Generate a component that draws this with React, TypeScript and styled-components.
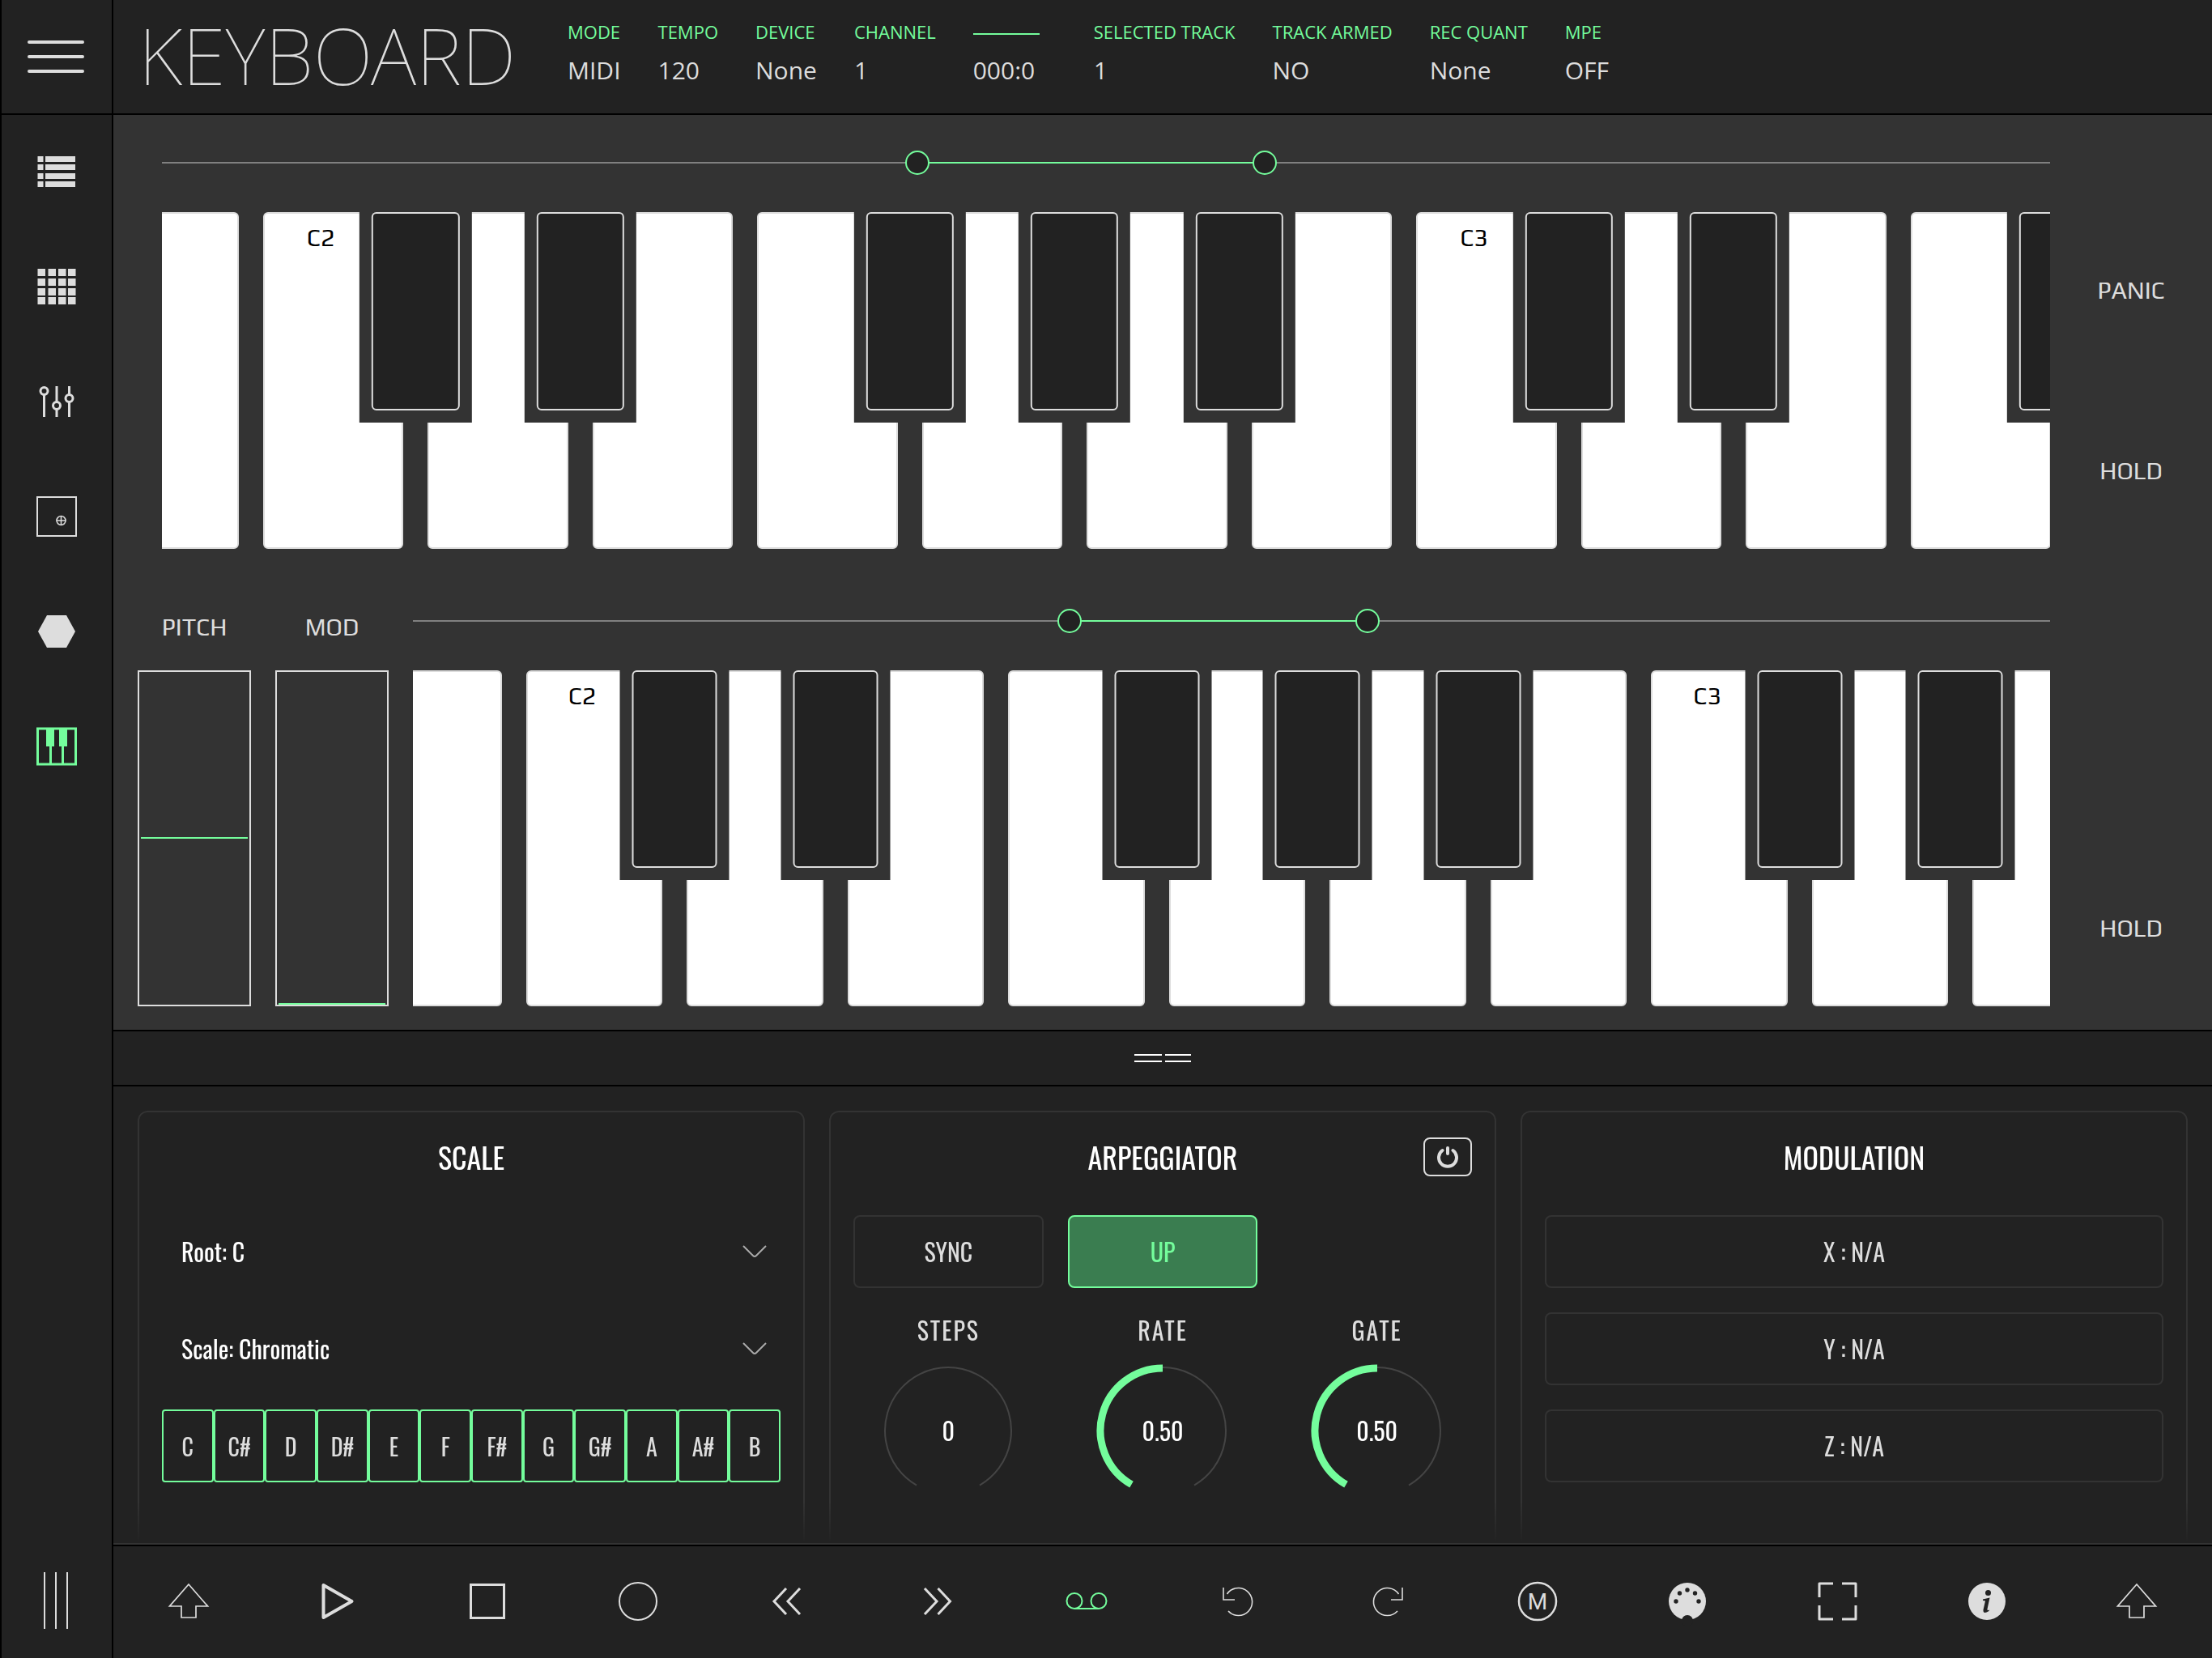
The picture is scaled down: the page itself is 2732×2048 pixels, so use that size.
import React, { useId, useState } from "react";
import styled, { createGlobalStyle, css } from "styled-components";

const c = {
  green: "#74fd9c",
  greenFill: "#3a7d50",
  ink: "#dddddd",
  white: "#ffffff",
  panel: "#222222",
  stage: "#333333",
  rail: "#808080",
  edge: "#333333",
};
const wide = `"Open Sans", "Noto Sans", sans-serif`;
const square = `"Blender Pro", "Play", "Share Tech", "Electrolize", "Oxanium", "DejaVu Sans Condensed", sans-serif`;
const narrow = `"Oswald", "Roboto Condensed", "Open Sans Condensed", "Noto Sans ExtraCondensed", "Noto Sans Condensed", "Lato", sans-serif`;

const GlobalStyle = createGlobalStyle`
  *, *::before, *::after { box-sizing: border-box; }
  body { margin: 0; background: ${c.panel}; color: ${c.ink}; font-family: ${narrow}; font-size: 30px; }
  button, select, input { font: inherit; color: inherit; margin: 0; padding: 0; }
  button { background: none; border: 0; cursor: pointer; }
  svg { display: block; fill: none; }
  h1, h2, p, dl, dt, dd { margin: 0; font-weight: 400; }
`;

/* ---------- shell ---------- */

const Shell = styled.div`
  display: grid;
  grid-template-columns: 140px minmax(0, 1fr);
  min-height: 100vh;
`;

const Sidebar = styled.nav`
  display: flex;
  flex-direction: column;
  align-items: stretch;
  border: solid #000;
  border-width: 0 2px;
`;

const MenuButton = styled.button`
  display: grid;
  place-items: center;
  height: 142px;
  padding-right: 2px;
  border-bottom: 2px solid #000;
`;

const NavButton = styled.button<{ $active?: boolean }>`
  display: grid;
  place-items: center;
  height: 142px;
  padding-bottom: 2px;
  color: ${(p) => (p.$active ? c.green : c.ink)};
`;

const SidebarGrip = styled.button`
  display: grid;
  place-items: center;
  height: 142px;
  padding-right: 2px;
  margin-top: auto;
`;

const Column = styled.div`
  display: flex;
  flex-direction: column;
  min-width: 0;
`;

/* ---------- header ---------- */

const Header = styled.header`
  display: flex;
  align-items: center;
  height: 142px;
  padding-left: 31px;
  border-bottom: 2px solid #000;
  white-space: nowrap;
`;

const Title = styled.h1`
  flex: 0 0 530px;
  padding-bottom: 6px;
  font-family: "Noto Sans", "Open Sans", sans-serif;
  font-weight: 100;
  font-size: 97px;
  line-height: 120px;
`;

const StatusList = styled.dl`
  display: flex;
  gap: 46px;
  height: 100%;
  padding-top: 23px;
  font-family: ${wide};
`;

const Status = styled.div<{ $width?: number }>`
  min-width: ${(p) => p.$width || 0}px;
`;

const StatusLabel = styled.dt`
  height: 32px;
  color: ${c.green};
  font-size: 22px;
  line-height: 32px;
`;

const StatusValue = styled.dd`
  margin-top: 12px;
  font-size: 30px;
  line-height: 40px;
`;

const CountLine = styled.span`
  display: inline-block;
  vertical-align: middle;
  width: 82px;
  height: 2px;
  background: ${c.green};
`;

/* ---------- keyboards ---------- */

const Stage = styled.main`
  display: flex;
  flex: 1;
  flex-direction: column;
  gap: 30px;
  min-height: 900px;
  padding-bottom: 29px;
  background: ${c.stage};
`;

const Manual = styled.section<{ $inset: number }>`
  display: flex;
  flex: 1;
  padding-left: ${(p) => p.$inset}px;
`;

const Wheels = styled.div`
  display: flex;
  gap: 30px;
  margin-right: 30px;
`;

const WheelColumn = styled.label`
  display: flex;
  flex-direction: column;
  width: 140px;
`;

const WheelName = styled.span`
  display: grid;
  place-items: center;
  height: 120px;
  padding-top: 14px;
  font-family: ${square};
  font-size: 30px;
  line-height: 36px;
`;

const WheelBox = styled.span`
  display: flex;
  flex: 1;
  border: 2px solid ${c.ink};
  padding: 0 2px;
  contain: size;
`;

const WheelInput = styled.input`
  flex: 1;
  width: 100%;
  height: 100%;
  appearance: none;
  writing-mode: vertical-lr;
  direction: rtl;
  background: none;
  &::-webkit-slider-runnable-track { width: 100%; background: none; }
  &::-webkit-slider-thumb {
    appearance: none;
    width: 132px;
    height: 2px;
    background: ${c.green};
  }
`;

const KeyColumn = styled.div`
  display: flex;
  flex: 1;
  flex-direction: column;
  min-width: 0;
`;

const RangeRow = styled.div`
  height: 120px;
  padding-bottom: 2px;
  display: grid;
  align-items: center;
`;

const Rail = styled.div`
  position: relative;
  height: 2px;
  background: ${c.rail};
`;

const RailFill = styled.div`
  position: absolute;
  top: 0;
  height: 2px;
  background: ${c.green};
`;

const RailInput = styled.input`
  position: absolute;
  top: -14px;
  left: -15px;
  width: calc(100% + 30px);
  height: 30px;
  appearance: none;
  background: none;
  pointer-events: none;
  &::-webkit-slider-runnable-track { height: 30px; background: none; }
  &::-webkit-slider-thumb {
    appearance: none;
    pointer-events: auto;
    width: 30px;
    height: 30px;
    border: 2px solid ${c.green};
    border-radius: 50%;
    background: ${c.panel};
  }
`;

const Keys = styled.div`
  display: flex;
  flex: 1;
  overflow: hidden;
`;

const KeyCell = styled.div<{ $visible: number; $shift: number }>`
  position: relative;
  flex: 0 0 ${(p) => 100 / p.$visible}%;
  padding: 0 15px;
  &:first-child { margin-left: ${(p) => (-100 * p.$shift) / p.$visible}%; }
`;

const WhiteKey = styled.button`
  display: block;
  width: 100%;
  height: 100%;
  background: ${c.white};
  border: 2px solid ${c.ink};
  border-radius: 6px;
  color: #000;
  font-family: ${square};
  font-size: 30px;
`;

const KeyName = styled.span`
  display: block;
  height: 100%;
  padding: 12px 18% 0 0;
  line-height: 36px;
`;

const BlackKeySlot = styled.div`
  position: absolute;
  z-index: 1;
  top: 0;
  left: 100%;
  width: 68%;
  height: 62.5%;
  padding: 0 15px 15px;
  background: ${c.stage};
  transform: translateX(-50%);
`;

const BlackKey = styled.button`
  display: block;
  width: 100%;
  height: 100%;
  background: ${c.panel};
  border: 2px solid ${c.ink};
  border-radius: 6px;
`;

const SideActions = styled.div`
  display: grid;
  grid-template-rows: 1fr 1fr;
  width: 200px;
  margin: 105px 0 -15px;
`;

const SideAction = styled.button`
  grid-row: span 1;
  font-family: ${square};
  font-size: 30px;
  &:only-child { grid-row: 2; }
`;

/* ---------- lower panel ---------- */

const Divider = styled.button`
  display: grid;
  place-items: center;
  height: 70px;
  border: solid #000;
  border-width: 2px 0;
`;

const Cards = styled.div`
  display: grid;
  grid-template-columns: repeat(3, minmax(0, 1fr));
  gap: 30px;
  padding: 30px 30px 0;
`;

const Card = styled.section`
  padding: 0 28px 59px;
  border: 2px solid ${c.edge};
  border-bottom: 0;
  border-radius: 12px 12px 0 0;
  mask-image: linear-gradient(#000 calc(100% - 50px), transparent);
`;

const CardHead = styled.div`
  display: grid;
  grid-template-columns: 60px 1fr 60px;
  align-items: center;
  height: 127px;
  padding-bottom: 17px;
`;

const CardTitle = styled.h2`
  grid-column: 2;
  color: ${c.white};
  font-size: 36px;
  line-height: 48px;
  text-align: center;
`;

const PowerButton = styled.button`
  display: grid;
  place-items: center;
  height: 48px;
  border: 2px solid ${c.ink};
  border-radius: 8px;
`;

const Stack = styled.div`
  display: grid;
  gap: 30px;
`;

const boxed = css`
  height: 90px;
  padding-bottom: 2px;
  border: 2px solid ${c.edge};
  border-radius: 8px;
`;

const PadButton = styled.button<{ $on?: boolean }>`
  ${boxed}
  ${(p) => p.$on && css`
    border-color: ${c.green};
    background: ${c.greenFill};
    color: ${c.green};
  `}
`;

const PickerBox = styled.div`
  display: grid;
  grid-template-columns: 1fr 30px;
  align-items: center;
  height: 90px;
  padding: 0 17px 0 24px;
`;

const Picker = styled.select`
  grid-area: 1 / 1 / 2 / 3;
  height: 90px;
  padding-bottom: 2px;
  appearance: none;
  border: 0;
  background: none;
  color: ${c.white};
  option { background: ${c.panel}; }
`;

const PickerArrow = styled.svg`
  grid-area: 1 / 2 / 2 / 3;
  pointer-events: none;
`;

const Notes = styled.div`
  display: grid;
  grid-template-columns: repeat(12, minmax(0, 1fr));
`;

const Note = styled.button<{ $on: boolean }>`
  height: 90px;
  border: 2px solid ${(p) => (p.$on ? c.green : c.edge)};
  border-radius: 4px;
  font-size: 28px;
`;

const Thirds = styled.div`
  display: grid;
  grid-template-columns: repeat(3, minmax(0, 1fr));
  column-gap: 30px;
`;

const KnobBox = styled.div`
  display: grid;
  justify-items: center;
`;

const KnobLabel = styled.span`
  letter-spacing: 2px;
  line-height: 44px;
`;

const KnobFace = styled.div`
  display: grid;
  place-items: center;
  width: 160px;
  margin-top: 22px;
  line-height: 44px;
  & > * { grid-area: 1 / 1; }
  svg { overflow: visible; }
`;

const KnobValue = styled.output`
  color: ${c.white};
`;

/* ---------- transport ---------- */

const Transport = styled.footer`
  display: grid;
  grid-template-columns: repeat(14, minmax(0, 1fr));
  height: 142px;
  border-top: 2px solid ${c.edge};
  box-shadow: inset 0 2px #000;
  padding-top: 2px;
`;

const TransportButton = styled.button<{ $active?: boolean }>`
  display: grid;
  place-items: center;
  color: ${(p) => (p.$active ? c.green : c.ink)};
`;

/* ---------- icons ---------- */

const IconList = () => (
  <svg width="50" height="50" viewBox="0 0 50 50">
    {[6, 16, 27, 37].map((y) => (
      <path key={y} fill="currentColor" d={`M1.5 ${y}h7v7h-7zM11 ${y}h37v7h-37z`} />
    ))}
  </svg>
);

const IconGrid = () => (
  <svg width="50" height="50" viewBox="0 0 50 50">
    {[3, 15, 27, 38].map((y) =>
      [1.5, 14.5, 27, 39].map((x) => (
        <rect key={`${x}-${y}`} x={x} y={y} width="9.5" height="9" fill="currentColor" />
      ))
    )}
  </svg>
);

const IconSliders = () => (
  <svg width="50" height="50" viewBox="0 0 50 50" stroke="currentColor" strokeWidth="3">
    <circle cx="9.5" cy="12" r="4.5" />
    <path d="M9.5 17V44M25 6V25M25 35V44M40.5 6V16M40.5 26V44" />
    <circle cx="25" cy="30" r="4.5" />
    <circle cx="40.5" cy="21" r="4.5" />
  </svg>
);

const IconXY = () => (
  <svg width="50" height="50" viewBox="0 0 50 50" stroke="currentColor">
    <rect x="1" y="1" width="48" height="48" strokeWidth="2" />
    <circle cx="30.5" cy="30" r="5.5" strokeWidth="1.5" />
    <path d="M30.5 24V36M24.5 30H36.5" strokeWidth="1.5" />
  </svg>
);

const IconHex = () => (
  <svg width="50" height="50" viewBox="0 0 50 50">
    <path fill="currentColor" d="M2 25 13 5H37L48 25 37 45H13Z" />
  </svg>
);

const IconKeys = () => (
  <svg width="50" height="50" viewBox="0 0 50 50">
    <rect x="1.5" y="3" width="47" height="44" stroke="currentColor" strokeWidth="3" />
    <path d="M17.5 3V47M32.5 3V47" stroke="currentColor" strokeWidth="3" />
    <path fill="currentColor" d="M12 3H22V25H12ZM28 3H38V25H28Z" />
  </svg>
);

const Glyph = ({ w = 2, children }: { w?: number; children: React.ReactNode }) => (
  <svg width="60" height="60" viewBox="0 0 60 60" stroke="currentColor" strokeWidth={w}>
    {children}
  </svg>
);

const upArrow = <Glyph w={1.7}><path d="M30 8 53.5 35H39V49H21V35H6.5Z" /></Glyph>;

const transport = [
  { name: "Bank up", icon: upArrow },
  { name: "Play", icon: <Glyph w={4}><path d="M11.5 9V49L46.5 29Z" strokeLinejoin="round" /></Glyph> },
  { name: "Stop", icon: <Glyph w={3}><rect x="8.5" y="8.5" width="41" height="41" /></Glyph> },
  { name: "Record", icon: <Glyph><circle cx="30" cy="29" r="23" /></Glyph> },
  { name: "Rewind", icon: <Glyph w={3}><path d="M28 13 13 29 28 45M45 13 30 29 45 45" /></Glyph> },
  { name: "Forward", icon: <Glyph w={3}><path d="M14 13 29 29 14 45M30.5 13 45.5 29 30.5 45" /></Glyph> },
  {
    name: "Loop", active: true,
    icon: <Glyph><circle cx="14" cy="28.5" r="9.5" /><circle cx="44" cy="28.5" r="9.5" /><path d="M14 38H44" /></Glyph>,
  },
  { name: "Undo", icon: <Glyph w={1.6}><path d="M16.5 20A17 17 0 1 1 18 41M12 12V27H26" /></Glyph> },
  { name: "Redo", icon: <Glyph w={1.6}><path d="M43.5 20A17 17 0 1 0 42 41M48 12V27H34" /></Glyph> },
  {
    name: "Metronome",
    icon: (
      <Glyph w={2.5}>
        <circle cx="30" cy="29" r="23" />
        <text x="30" y="39" textAnchor="middle" fontFamily="Roboto, sans-serif" fontSize="28" fill="currentColor" stroke="none">M</text>
      </Glyph>
    ),
  },
  {
    name: "MIDI",
    icon: (
      <Glyph w={0}>
        <circle cx="30" cy="29" r="23" fill="currentColor" />
        {[[16, 29], [20.5, 19], [30, 15], [39.5, 19], [44, 29]].map(([x, y]) => (
          <circle key={x} cx={x} cy={y} r="2.7" fill={c.panel} />
        ))}
        <circle cx="30" cy="53" r="7" fill={c.panel} />
      </Glyph>
    ),
  },
  {
    name: "Full screen",
    icon: <Glyph w={3}><path d="M8 24V7H25M36 7H53V24M53 34V51H36M25 51H8V34" strokeLinejoin="round" /></Glyph>,
  },
  {
    name: "Info",
    icon: (
      <Glyph w={0}>
        <circle cx="30" cy="29" r="23" fill="currentColor" />
        <circle cx="31.5" cy="18.5" r="3.5" fill={c.panel} />
        <path d="M25 26.5 33.5 24.5 30.5 38.5Q30 41 33 39.5L32.5 41Q25 45.5 25.5 39.5L28 28.5 25 28Z" fill={c.panel} />
      </Glyph>
    ),
  },
  { name: "Bank down", icon: upArrow },
];

const views = [
  { name: "Tracks", icon: <IconList /> },
  { name: "Pads", icon: <IconGrid /> },
  { name: "Mixer", icon: <IconSliders /> },
  { name: "XY pad", icon: <IconXY /> },
  { name: "Hex pad", icon: <IconHex /> },
  { name: "Keyboard", icon: <IconKeys />, active: true },
];

const statuses = [
  { label: "MODE", value: "MIDI" },
  { label: "TEMPO", value: "120" },
  { label: "DEVICE", value: "None" },
  { label: "CHANNEL", value: "1" },
  { label: "", value: "000:0", width: 103 },
  { label: "SELECTED TRACK", value: "1" },
  { label: "TRACK ARMED", value: "NO" },
  { label: "REC QUANT", value: "None" },
  { label: "MPE", value: "OFF" },
];

/* ---------- parts ---------- */

function RangeSlider({ name, from, to }: { name: string; from: number; to: number }) {
  const [low, setLow] = useState(from);
  const [high, setHigh] = useState(to);
  return (
    <RangeRow>
      <Rail>
        <RailFill style={{ left: `${low}%`, width: `${high - low}%` }} />
        <RailInput type="range" step="0.1" aria-label={`${name} low`} value={low}
          onChange={(e) => setLow(Math.min(+e.target.value, high))} />
        <RailInput type="range" step="0.1" aria-label={`${name} high`} value={high}
          onChange={(e) => setHigh(Math.max(+e.target.value, low))} />
      </Rail>
    </RangeRow>
  );
}

const scaleNames = ["C", "D", "E", "F", "G", "A", "B"];
const hasSharp = new Set(["C", "D", "F", "G", "A"]);

function Piano({ visible, shift }: { visible: number; shift: number }) {
  return (
    <Keys>
      {Array.from({ length: 12 }, (_, i) => {
        const step = i + 6;
        const note = scaleNames[step % 7];
        const full = `${note}${1 + Math.floor(step / 7)}`;
        return (
          <KeyCell key={full} $visible={visible} $shift={shift}>
            <WhiteKey aria-label={full}>{note === "C" && <KeyName>{full}</KeyName>}</WhiteKey>
            {hasSharp.has(note) && (
              <BlackKeySlot><BlackKey aria-label={`${full} sharp`} /></BlackKeySlot>
            )}
          </KeyCell>
        );
      })}
    </Keys>
  );
}

function Wheel({ name, start }: { name: string; start: number }) {
  const [value, setValue] = useState(start);
  const id = useId();
  return (
    <WheelColumn htmlFor={id}>
      <WheelName>{name}</WheelName>
      <WheelBox>
        <WheelInput id={id} type="range" value={value} onChange={(e) => setValue(+e.target.value)} />
      </WheelBox>
    </WheelColumn>
  );
}

function point(turn: number, r: number) {
  const a = (turn * Math.PI) / 180;
  return `${(80 - r * Math.sin(a)).toFixed(2)} ${(80 + r * Math.cos(a)).toFixed(2)}`;
}

function Knob({ name, value, text }: { name: string; value: number; text: string }) {
  const end = 30 + 300 * value;
  return (
    <KnobBox>
      <KnobLabel>{name}</KnobLabel>
      <KnobFace>
        <svg width="160" height="160" viewBox="0 0 160 160">
          <path d={`M${point(30, 78)}A78 78 0 1 1 ${point(330, 78)}`} stroke="#444444" strokeWidth="2" />
          {value > 0 && (
            <path d={`M${point(30, 77)}A77 77 0 ${value > 0.6 ? 1 : 0} 1 ${point(end, 77)}`} stroke={c.green} strokeWidth="9" />
          )}
        </svg>
        <KnobValue>{text}</KnobValue>
      </KnobFace>
    </KnobBox>
  );
}

function Select({ name, options }: { name: string; options: string[] }) {
  return (
    <PickerBox>
      <Picker aria-label={name}>
        {options.map((o) => <option key={o}>{`${name}: ${o}`}</option>)}
      </Picker>
      <PickerArrow width="30" height="18" viewBox="0 0 30 18" stroke="#aaaaaa" strokeWidth="2">
        <path d="M1 2 13 14Q15 16 17 14L29 2" />
      </PickerArrow>
    </PickerBox>
  );
}

const chromatic = ["C", "C#", "D", "D#", "E", "F", "F#", "G", "G#", "A", "A#", "B"];

export default function App() {
  const [notes, setNotes] = useState(() => new Set(chromatic));
  const toggle = (n: string) => {
    const next = new Set(notes);
    if (!next.delete(n)) next.add(n);
    setNotes(next);
  };

  return (
    <Shell>
      <GlobalStyle />
      <Sidebar>
        <MenuButton aria-label="Menu">
          <svg width="70" height="42" viewBox="0 0 70 42" stroke="currentColor" strokeWidth="4" strokeLinecap="round">
            <path d="M2 3H68M2 21H68M2 39H68" />
          </svg>
        </MenuButton>
        {views.map((v) => (
          <NavButton key={v.name} aria-label={v.name} $active={v.active}>{v.icon}</NavButton>
        ))}
        <SidebarGrip aria-label="Resize sidebar">
          <svg width="30" height="70" viewBox="0 0 30 70" stroke="currentColor" strokeWidth="2">
            <path d="M1 0V70M15 0V70M29 0V70" />
          </svg>
        </SidebarGrip>
      </Sidebar>

      <Column>
        <Header>
          <Title>KEYBOARD</Title>
          <StatusList>
            {statuses.map((s) => (
              <Status key={s.label} $width={s.width}>
                <StatusLabel>{s.label || <CountLine />}</StatusLabel>
                <StatusValue>{s.value}</StatusValue>
              </Status>
            ))}
          </StatusList>
        </Header>

        <Stage>
          <Manual $inset={60}>
            <KeyColumn>
              <RangeSlider name="Upper keys" from={40} to={58.4} />
              <Piano visible={11.46} shift={0.461} />
            </KeyColumn>
            <SideActions>
              <SideAction>PANIC</SideAction>
              <SideAction>HOLD</SideAction>
            </SideActions>
          </Manual>
          <Manual $inset={30}>
            <Wheels>
              <Wheel name="PITCH" start={50} />
              <Wheel name="MOD" start={0} />
            </Wheels>
            <KeyColumn>
              <RangeSlider name="Lower keys" from={40.1} to={58.3} />
              <Piano visible={10.185} shift={0.372} />
            </KeyColumn>
            <SideActions>
              <SideAction>HOLD</SideAction>
            </SideActions>
          </Manual>
        </Stage>

        <Divider aria-label="Resize panel">
          <svg width="70" height="10" viewBox="0 0 70 10" stroke="#ffffff" strokeWidth="2">
            <path d="M0 1H34M38 1H70M0 9H34M38 9H70" />
          </svg>
        </Divider>

        <Cards>
          <Card>
            <CardHead><CardTitle>SCALE</CardTitle></CardHead>
            <Stack>
              <Select name="Root" options={["C", "D", "E", "F", "G", "A", "B"]} />
              <Select name="Scale" options={["Chromatic", "Major", "Minor"]} />
              <Notes>
                {chromatic.map((n) => (
                  <Note key={n} $on={notes.has(n)} aria-pressed={notes.has(n)} onClick={() => toggle(n)}>{n}</Note>
                ))}
              </Notes>
            </Stack>
          </Card>
          <Card>
            <CardHead>
              <CardTitle>ARPEGGIATOR</CardTitle>
              <PowerButton aria-label="Arpeggiator power">
                <svg width="30" height="30" viewBox="0 0 30 30" stroke="currentColor" strokeWidth="4" strokeLinecap="round">
                  <path d="M8.5 7A11 11 0 1 0 21.5 7M15 4V11" />
                </svg>
              </PowerButton>
            </CardHead>
            <Stack>
              <Thirds>
                <PadButton>SYNC</PadButton>
                <PadButton $on>UP</PadButton>
              </Thirds>
              <Thirds>
                <Knob name="STEPS" value={0} text="0" />
                <Knob name="RATE" value={0.5} text="0.50" />
                <Knob name="GATE" value={0.5} text="0.50" />
              </Thirds>
            </Stack>
          </Card>
          <Card>
            <CardHead><CardTitle>MODULATION</CardTitle></CardHead>
            <Stack>
              {["X", "Y", "Z"].map((axis) => <PadButton key={axis}>{`${axis} : N/A`}</PadButton>)}
            </Stack>
          </Card>
        </Cards>

        <Transport>
          {transport.map((t) => (
            <TransportButton key={t.name} aria-label={t.name} $active={t.active}>{t.icon}</TransportButton>
          ))}
        </Transport>
      </Column>
    </Shell>
  );
}
